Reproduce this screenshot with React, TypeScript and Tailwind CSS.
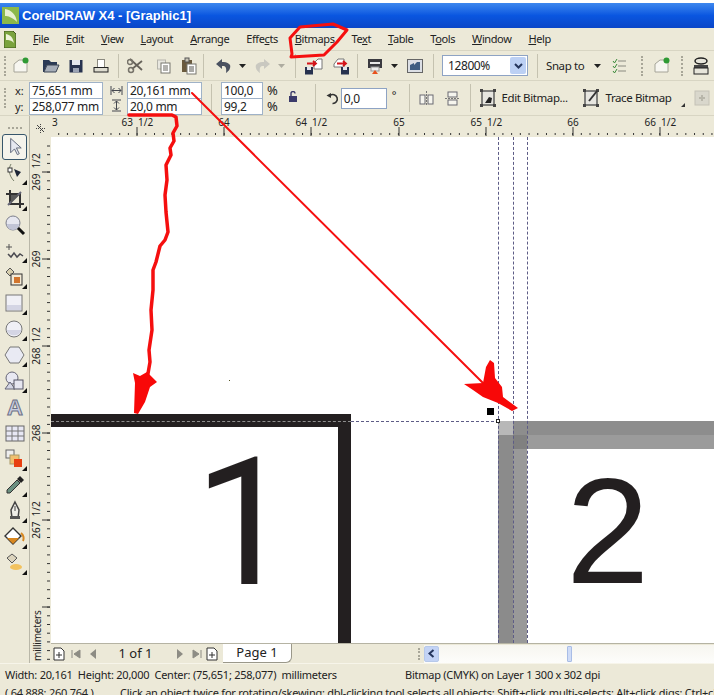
import type { ReactNode } from "react";

const menus: [string, string, string][] = [
  ["", "F", "ile"],
  ["", "E", "dit"],
  ["", "V", "iew"],
  ["", "L", "ayout"],
  ["", "A", "rrange"],
  ["Effe", "c", "ts"],
  ["", "B", "itmaps"],
  ["Te", "x", "t"],
  ["", "T", "able"],
  ["T", "o", "ols"],
  ["", "W", "indow"],
  ["", "H", "elp"],
];

function Ico({ w = 16, h = 16, children, className = "" }: { w?: number; h?: number; children: ReactNode; className?: string }) {
  return (
    <svg width={w} height={h} viewBox={`0 0 ${w} ${h}`} className={`shrink-0 ${className}`}>
      {children}
    </svg>
  );
}

function Grip() {
  return <div className="h-[20px] w-[2px] shrink-0 border-l-2 border-dotted border-[#a8a698]" />;
}

function Sep({ h = "h-[24px]" }: { h?: string }) {
  return <div className={`${h} w-px shrink-0 bg-[#c5c2b0]`} />;
}

function Caret() {
  return (
    <Ico w={7} h={4}>
      <path d="M0 0h7L3.5 4z" fill="#222" />
    </Ico>
  );
}

function Corner() {
  return <path d="M0 5L5 0V5z" fill="#111" transform="translate(19 19)" />;
}

function NewDoc() {
  return (
    <Ico w={18} h={18}>
      <path d="M2 7l5-4h8v12H2z" fill="#f7f6f0" stroke="#a5a498" />
      <circle cx="13.5" cy="3.5" r="3" fill="#2f9a34" />
    </Ico>
  );
}

function Open() {
  return (
    <Ico w={18} h={16}>
      <path d="M1 2h6l2 2h6v3H5L2 14H1z" fill="#2b3a55" />
      <path d="M5 7h12l-3 7H2z" fill="#a6adb8" stroke="#3b4454" />
    </Ico>
  );
}

function Save() {
  return (
    <Ico w={14} h={14}>
      <rect x="0.5" y="1" width="13" height="12.5" fill="#27324f" />
      <rect x="3" y="1" width="8" height="5" fill="#e4e7ee" />
      <rect x="4" y="9" width="6" height="4.5" fill="#9aa2b4" />
    </Ico>
  );
}

function Print() {
  return (
    <Ico w={16} h={16}>
      <rect x="4.5" y="1.5" width="7" height="8" fill="#fff" stroke="#8c8a80" />
      <rect x="1" y="9.5" width="14" height="4.5" fill="#dedcd0" stroke="#222" />
    </Ico>
  );
}

function Cut() {
  return (
    <Ico w={18} h={18}>
      <path d="M3 2l12 11M15 4L5 12" stroke="#66625a" strokeWidth="1.8" fill="none" />
      <circle cx="4" cy="13" r="2.5" fill="none" stroke="#77736a" strokeWidth="1.5" />
      <circle cx="3" cy="5" r="2.5" fill="none" stroke="#77736a" strokeWidth="1.5" />
    </Ico>
  );
}

function Copy() {
  return (
    <Ico w={16} h={16}>
      <rect x="1.5" y="2" width="8" height="9" fill="#e8e7e0" stroke="#b5b4ac" />
      <rect x="5" y="5" width="9" height="10" fill="#fff" stroke="#77766e" />
      <path d="M7 8h5M7 10h5M7 12h5" stroke="#66655e" />
    </Ico>
  );
}

function Paste() {
  return (
    <Ico w={16} h={18}>
      <rect x="1" y="3" width="10" height="12" fill="#6a5a3e" />
      <rect x="4" y="1" width="4" height="4" fill="#c9c5b6" stroke="#555" />
      <rect x="6" y="7" width="9" height="10" fill="#fff" stroke="#77766e" />
      <path d="M8 10h5M8 12h5M8 14h5" stroke="#55544e" />
    </Ico>
  );
}

function Arc({ color, flip = false }: { color: string; flip?: boolean }) {
  return (
    <Ico w={17} h={16}>
      <g transform={flip ? "translate(17 0) scale(-1 1)" : undefined}>
        <path d="M7 1L1 6l6 5V8c3-.5 5 1 4 7 3-2 5-5 4-8-1-2-4-3.5-8-3z" fill={color} />
      </g>
    </Ico>
  );
}

function Transfer({ out = false }: { out?: boolean }) {
  return (
    <Ico w={19} h={18}>
      {out ? (
        <path d="M3 7l4-5h6v8H3z" fill="#fff" stroke="#777" />
      ) : (
        <path d="M10 6l4-4h4v10h-8z" fill="#fff" stroke="#777" />
      )}
      <rect x={out ? 10 : 1} y="10" width="8" height="7.5" fill="#27324f" />
      <rect x={out ? 12 : 3} y="10" width="4" height="3" fill="#e4e7ee" />
      <path d={out ? "M6 6.5h9M12 4l3 2.5-3 2.5" : "M3 6.5h9M9 4l3 2.5-3 2.5"} stroke="#d4141a" strokeWidth="1.8" fill="none" />
    </Ico>
  );
}

function Launcher() {
  return (
    <Ico w={18} h={18}>
      <rect x="2" y="2" width="14" height="9" fill="#3a3a40" />
      <rect x="4" y="5" width="10" height="2" fill="#e8e8e8" />
      <rect x="5" y="10" width="8" height="4" fill="#eee" stroke="#999" />
      <path d="M6 17l3-4 3 4z" fill="#e8501c" />
    </Ico>
  );
}

function Welcome() {
  return (
    <Ico w={16} h={16}>
      <rect x="0.5" y="1.5" width="15" height="13" fill="#dcdfe5" stroke="#666" />
      <path d="M3 12V7l4-2v2l3-3h3v8z" fill="#3f5d82" />
    </Ico>
  );
}

function Checks() {
  return (
    <Ico w={14} h={16}>
      <path d="M1 3l1.5 2L5 1M1 8l1.5 2L5 6M1 13l1.5 2L5 11" stroke="#3b8a3b" fill="none" />
      <path d="M6 3h8M6 8h8M6 13h8" stroke="#8a8a80" />
    </Ico>
  );
}

function Guard() {
  return (
    <Ico w={16} h={18}>
      <ellipse cx="8" cy="4" rx="6" ry="3" fill="#e7e5da" stroke="#222" strokeWidth="1.5" />
      <rect x="1" y="8" width="14" height="3" fill="#444" />
      <rect x="1" y="11" width="14" height="6" fill="#e7e5da" stroke="#222" />
    </Ico>
  );
}

function BitmapFrame({ pen = false, dim = false }: { pen?: boolean; dim?: boolean }) {
  if (dim) {
    return (
      <Ico w={16} h={16}>
        <rect x="1" y="1" width="14" height="14" fill="#d9d7cc" stroke="#c4c2b6" />
        <path d="M5 8h6M8 5v6" stroke="#b8b6aa" strokeWidth="2" />
      </Ico>
    );
  }
  return (
    <Ico w={16} h={18}>
      <rect x="2" y="2" width="12" height="14" fill="#e7e6e0" stroke="#555" strokeWidth="1.4" />
      <rect x="0" y="0" width="3" height="3" fill="#444" />
      <rect x="13" y="0" width="3" height="3" fill="#444" />
      <rect x="0" y="15" width="3" height="3" fill="#444" />
      <rect x="13" y="15" width="3" height="3" fill="#444" />
      {pen ? <path d="M6 12l8-10" stroke="#333" strokeWidth="2" /> : <path d="M5 14l4-6 3 1-1 5z" fill="#222" />}
    </Ico>
  );
}

function Tool({ children, corner = true, active = false }: { children: ReactNode; corner?: boolean; active?: boolean }) {
  return (
    <div
      className={`flex h-[26px] w-[25px] shrink-0 items-center justify-center ${
        active ? "rounded-[3px] border border-[#37566b] bg-[#f5f4ec]" : ""
      }`}
    >
      <svg width="24" height="24" viewBox="0 0 24 24">
        {children}
        {corner && <Corner />}
      </svg>
    </div>
  );
}

function ToolBox() {
  return (
    <div className="flex h-full w-[30px] shrink-0 flex-col items-center border-r border-[#b9b7a8] pt-[11px]">
      <div className="mb-[5px] h-px w-[14px] border-t-2 border-dotted border-[#a8a698]" />
      <Tool corner={false} active>
        <path d="M8 3v15l4-4 3 6 2-1-3-6h5z" fill="#e6e8f0" stroke="#5f6678" />
      </Tool>
      <Tool>
        <path d="M8 3C5 8 6 15 11 20" stroke="#78806a" fill="none" />
        <rect x="5" y="7" width="4" height="4" fill="#fff" stroke="#333" />
        <path d="M11 8l7 3-4 5z" fill="#1c2436" />
      </Tool>
      <Tool>
        <path d="M7 3v14h14M3 7h14v14" stroke="#333" strokeWidth="2" fill="none" />
        <path d="M5 18L18 5" stroke="#667" strokeWidth="2" />
        <path d="M8 16V8h8z" fill="#5a5a5a" />
      </Tool>
      <Tool corner={false}>
        <circle cx="10" cy="10" r="7" fill="#e6e7f0" stroke="#7c7f8c" />
        <path d="M4 11a6 6 0 0012 0z" fill="#c1c4d6" />
        <path d="M15 15l6 6" stroke="#111" strokeWidth="3" />
      </Tool>
      <Tool>
        <path d="M3 8h6M6 5v6" stroke="#555" />
        <path d="M5 15l3 3 3-4 3 4 3-3 3 2" stroke="#4a4a50" strokeWidth="1.5" fill="none" />
      </Tool>
      <Tool>
        <path d="M3 7l4-4 4 4-4 4z" fill="#d8cfae" stroke="#555" />
        <rect x="8" y="9" width="11" height="11" fill="#f3ead6" stroke="#333" />
        <rect x="11" y="12" width="6" height="6" fill="#d2752d" />
      </Tool>
      <Tool>
        <rect x="3" y="4" width="16" height="16" fill="#f0f0f6" stroke="#777" />
        <path d="M4 14h14v5H4z" fill="#d4d5e4" />
      </Tool>
      <Tool>
        <circle cx="11" cy="12" r="8" fill="#f0f0f6" stroke="#777" />
        <path d="M3.5 13a8 8 0 0015 0z" fill="#d4d5e4" />
      </Tool>
      <Tool>
        <path d="M7 4h9l5 8-5 8H7l-5-8z" fill="#e9eaf3" stroke="#777" />
      </Tool>
      <Tool>
        <circle cx="9" cy="9" r="6" fill="#e8e8f2" stroke="#667" />
        <path d="M2 20l5-7 5 7z" fill="#d3d5e4" stroke="#667" />
        <rect x="11" y="11" width="9" height="9" fill="#e6e6f0" stroke="#556" />
      </Tool>
      <Tool corner={false}>
        <text x="12" y="20" textAnchor="middle" fontFamily="Liberation Sans, sans-serif" fontSize="22" fontWeight="700" fill="#c9cce0" stroke="#6d7286" strokeWidth="1">
          A
        </text>
      </Tool>
      <Tool corner={false}>
        <rect x="3" y="5" width="18" height="15" fill="#e8e8f4" stroke="#666" />
        <path d="M3 10h18M3 15h18M9 5v15M15 5v15" stroke="#777" />
      </Tool>
      <Tool>
        <rect x="3" y="3" width="8" height="8" fill="#eee" stroke="#666" />
        <rect x="7" y="8" width="9" height="9" fill="#f0c070" stroke="#a96" />
        <rect x="11" y="12" width="8" height="8" fill="#e83f10" />
      </Tool>
      <Tool>
        <path d="M17 3l4 4-3 3-4-4z" fill="#222" />
        <path d="M14 7l3 3L7 20H4v-3z" fill="#6c9080" stroke="#333" />
      </Tool>
      <Tool>
        <path d="M12 3l4 8-1 8H9l-1-8z" fill="#efeee8" stroke="#444" strokeWidth="1.5" />
        <path d="M12 7v5" stroke="#444" />
        <rect x="7" y="17" width="10" height="3" fill="#555" />
      </Tool>
      <Tool>
        <path d="M2 11l8-8 8 8-8 8z" fill="#fff" stroke="#333" strokeWidth="1.4" />
        <path d="M4 13h12l-6 6z" fill="#d8871f" />
        <path d="M18 8c3 2 3 6 2 8" stroke="#d8871f" strokeWidth="2" fill="none" />
      </Tool>
      <Tool>
        <path d="M4 7l5-4 5 4-5 5z" fill="#dcd4bd" stroke="#555" />
        <ellipse cx="13" cy="16" rx="6" ry="3" fill="#f2c25e" />
      </Tool>
    </div>
  );
}

function VerticalRuler() {
  const marks: [number, string][] = [
    [35, "269  1/2"],
    [122, "269"],
    [209, "268  1/2"],
    [296, "268"],
    [383, "267  1/2"],
  ];
  return (
    <svg width="21" height="526" className="shrink-0">
      {Array.from({ length: 61 }, (_, i) => (
        <line key={i} x1="17" x2="20" y1={9 + i * 8.7} y2={9 + i * 8.7} stroke="#333" />
      ))}
      {[35, 122, 209, 296, 383, 470].map((y) => (
        <line key={y} x1="12" x2="20" y1={y} y2={y} stroke="#333" />
      ))}
      {marks.map(([y, t]) => (
        <text key={y} transform={`translate(10 ${y}) rotate(-90)`} textAnchor="middle" fontSize="10" fill="#222" xmlSpace="preserve" fontFamily="Noto Sans, sans-serif">
          {t}
        </text>
      ))}
      <text transform="translate(11 524) rotate(-90)" fontSize="10" letterSpacing="-0.2" fill="#222" fontFamily="Noto Sans, sans-serif">
        millimeters
      </text>
    </svg>
  );
}

function TopRuler() {
  const ints: [number, string][] = [
    [173, "64"],
    [348, "65"],
    [522, "66"],
  ];
  const halves: [number, string][] = [
    [86, "63"],
    [260, "64"],
    [435, "65"],
    [609, "66"],
  ];
  return (
    <svg width="663" height="21" className="shrink-0">
      {Array.from({ length: 78 }, (_, i) => (
        <line key={i} x1={-1 + i * 8.71} x2={-1 + i * 8.71} y1="17" y2="19" stroke="#333" />
      ))}
      {[...ints, ...halves].map(([x]) => (
        <line key={x} x1={x} x2={x} y1="11" y2="20" stroke="#333" />
      ))}
      <text x="1" y="10" fontSize="10" fill="#222" fontFamily="Noto Sans, sans-serif">
        3
      </text>
      {ints.map(([x, t]) => (
        <text key={x} x={x} y="10" textAnchor="middle" fontSize="10" fill="#222" fontFamily="Noto Sans, sans-serif">
          {t}
        </text>
      ))}
      {halves.map(([x, t]) => (
        <g key={x} fontSize="10" fill="#222" fontFamily="Noto Sans, sans-serif">
          <text x={x - 4} y="10" textAnchor="end">
            {t}
          </text>
          <text x={x + 1} y="10">
            1/2
          </text>
        </g>
      ))}
    </svg>
  );
}

function Canvas() {
  return (
    <div className="relative h-[506px] w-[663px] overflow-hidden bg-white">
      <div className="absolute left-0 top-[277px] h-[13px] w-[300px] bg-[#231f20]" />
      <div className="absolute left-[287px] top-[277px] h-[229px] w-[13px] bg-[#231f20]" />
      <div className="absolute left-0 top-[284px] w-[300px] border-t border-dashed border-[#8d8d8d]" />
      <div className="absolute left-[300px] top-[284px] w-[363px] border-t border-dashed border-[#5d5c86]" />

      <div className="absolute left-[447px] top-[284px] h-[14px] w-[15px] bg-[#b8b8b8]" />
      <div className="absolute left-[462px] top-[284px] h-[14px] w-[201px] bg-[#8d8d8d]" />
      <div className="absolute left-[447px] top-[298px] h-[208px] w-[15px] bg-[#8b8b8b]" />
      <div className="absolute left-[462px] top-[298px] h-[208px] w-[14px] bg-[#999999]" />
      <div className="absolute left-[462px] top-[298px] h-[14px] w-[14px] bg-[#808080]" />
      <div className="absolute left-[476px] top-[298px] h-[14px] w-[187px] bg-[#9b9b9b]" />

      <div className="absolute left-[447px] top-0 h-[506px] border-l border-dashed border-[#5d5c86]" />
      <div className="absolute left-[462px] top-0 h-[506px] border-l border-dashed border-[#5d5c86]" />
      <div className="absolute left-[476px] top-0 h-[506px] border-l border-dashed border-[#5d5c86]" />

      <div className="absolute left-[436px] top-[271px] h-[7px] w-[7px] bg-black" />
      <div className="absolute left-[445px] top-[282px] h-[4px] w-[4px] border border-[#222] bg-white" />
      <div className="absolute left-[178px] top-[243px] h-px w-px bg-[#552]" />

      <span className="absolute left-[143px] top-[297px] font-['Roboto',sans-serif] text-[178px] leading-[1] text-[#231f20]">1</span>
      <span className="absolute left-[515px] top-[319px] font-['Liberation_Sans',sans-serif] text-[150px] leading-[1] text-[#231f20]">2</span>
    </div>
  );
}

function PageBar() {
  return (
    <div className="flex h-[20px] shrink-0 items-center border-t border-[#b5b3a3] text-[12px]">
      <div className="flex w-[367px] shrink-0 items-center">
        <Ico w={12} h={14} className="ml-[2px]">
          <path d="M1 1h7l3 3v9H1z" fill="#fff" stroke="#333" />
          <path d="M6 5v6M3 8h6" stroke="#333" />
        </Ico>
        <Ico w={10} h={10} className="ml-[6px]">
          <path d="M1 1v8M9 1L3 5l6 4z" fill="#8d8c84" stroke="#8d8c84" />
        </Ico>
        <Ico w={7} h={10} className="ml-[9px]">
          <path d="M6 0v10L0 5z" fill="#8d8c84" />
        </Ico>
        <span className="ml-[11px] w-[55px] text-center text-[13px] text-[#222]">1 of 1</span>
        <Ico w={7} h={10} className="ml-[13px]">
          <path d="M1 0v10l6-5z" fill="#8d8c84" />
        </Ico>
        <Ico w={10} h={10} className="ml-[9px]">
          <path d="M9 1v8M1 1l6 4-6 4z" fill="#8d8c84" stroke="#8d8c84" />
        </Ico>
        <Ico w={12} h={14} className="ml-[4px]">
          <path d="M1 1h7l3 3v9H1z" fill="#fff" stroke="#333" />
          <path d="M6 5v6M3 8h6" stroke="#333" />
        </Ico>
        <div className="ml-[5px] flex h-[19px] w-[69px] items-center justify-center rounded-br-[6px] border-r border-b border-[#9a988a] bg-white text-[13px] text-[#222]">
          Page 1
        </div>
      </div>
      <div className="h-[12px] w-[2px] shrink-0 border-l-2 border-dotted border-[#a8a698]" />
      <div className="ml-[4px] flex h-[18px] flex-1 items-center bg-gradient-to-b from-[#f7f6f0] to-[#fdfdfb]">
        <div className="flex h-[16px] w-[15px] items-center justify-center rounded-[2px] border border-[#b7c9ea] bg-[#c3d3f5]">
          <Ico w={7} h={9}>
            <path d="M5.5 1L1.5 4.5 5.5 8" stroke="#25355c" strokeWidth="2" fill="none" />
          </Ico>
        </div>
        <div className="ml-[128px] h-[16px] w-[5px] rounded-[1px] border border-[#a9bde6] bg-[#cfdcf7]" />
      </div>
    </div>
  );
}

export default function App() {
  return (
    <div className="relative flex h-[695px] w-[714px] flex-col overflow-hidden bg-[#ece9d8] font-['Noto_Sans',sans-serif] text-[11px] text-[#222]">
      <div className="h-[3px] shrink-0 bg-white" />
      <div className="flex h-[25px] shrink-0 items-center gap-[3px] bg-gradient-to-b from-[#3d87ee] via-[#0a56e0] to-[#0a46c8] pl-[2px]">
        <Ico w={17} h={17}>
          <rect width="17" height="17" fill="#8cb84a" />
          <path d="M3 2c6 1 11 5 12 13-5-5-9-6-12-6z" fill="#e8f0d0" />
        </Ico>
        <span className="font-['Liberation_Sans',sans-serif] text-[13px] font-bold text-white">CorelDRAW X4 - [Graphic1]</span>
      </div>

      <div className="flex h-[23px] shrink-0 items-center gap-[17px] border-b border-[#d8d5c3] pl-[4px] tracking-[-0.4px]">
        <Ico w={12} h={17}>
          <path d="M0 0h9l3 3v14H0z" fill="#7ba33e" stroke="#41591d" />
          <path d="M2 3c5 1 7 4 8 9-3-3-5-3-8-3z" fill="#eef3d8" />
        </Ico>
        {menus.map(([a, b, c]) => (
          <span key={a + b + c}>
            {a}
            <u>{b}</u>
            {c}
          </span>
        ))}
      </div>

      <div className="flex h-[30px] shrink-0 items-center border-b border-[#d8d5c3] pl-[4px]">
        <Grip />
        <div className="ml-[6px]"><NewDoc /></div>
        <div className="ml-[12px]"><Open /></div>
        <div className="ml-[9px]"><Save /></div>
        <div className="ml-[10px]"><Print /></div>
        <div className="ml-[9px] mr-[8px]"><Sep /></div>
        <Cut />
        <div className="ml-[11px]"><Copy /></div>
        <div className="ml-[9px]"><Paste /></div>
        <div className="mx-[6px]"><Sep /></div>
        <div className="ml-[5px]"><Arc color="#4a5160" /></div>
        <div className="ml-[7px]"><Caret /></div>
        <div className="ml-[8px]"><Arc color="#c9c8c0" flip /></div>
        <div className="ml-[7px] opacity-30"><Caret /></div>
        <div className="ml-[10px]"><Sep /></div>
        <div className="ml-[8px]"><Transfer /></div>
        <div className="ml-[8px]"><Transfer out /></div>
        <div className="ml-[7px]"><Sep /></div>
        <div className="ml-[8px]"><Launcher /></div>
        <div className="ml-[7px]"><Caret /></div>
        <div className="ml-[9px]"><Welcome /></div>
        <div className="ml-[10px]"><Sep /></div>
        <div className="ml-[8px] flex h-[21px] w-[86px] shrink-0 items-center justify-between border border-[#8ea3c4] bg-white pl-[5px] pr-px text-[12px] tracking-[-0.4px]">
          12800%
          <div className="flex h-[17px] w-[16px] items-center justify-center rounded-[2px] bg-[#bcd0f4]">
            <Ico w={9} h={6}>
              <path d="M1 1l3.5 3.5L8 1" stroke="#25355c" strokeWidth="2" fill="none" />
            </Ico>
          </div>
        </div>
        <div className="ml-[9px]"><Sep /></div>
        <span className="ml-[8px] whitespace-nowrap text-[11.5px] tracking-[-0.4px]">Snap to</span>
        <div className="ml-[10px]"><Caret /></div>
        <div className="ml-[11px]"><Checks /></div>
        <div className="ml-[15px]"><Grip /></div>
        <div className="ml-[10px]"><NewDoc /></div>
        <div className="ml-[10px]"><Grip /></div>
        <div className="ml-[10px]"><Guard /></div>
      </div>

      <div className="flex h-[35px] shrink-0 items-center border-b border-[#d8d5c3] pl-[4px] whitespace-nowrap">
        <Grip />
        <div className="ml-[9px] flex w-[14px] shrink-0 flex-col gap-[1px] text-[11px] leading-[15px]">
          <span>x:</span>
          <span>y:</span>
        </div>
        <div className="flex w-[74px] shrink-0 flex-col text-[12px] leading-[15px] tracking-[-0.3px]">
          <div className="h-[17px] border border-[#9fb2c8] bg-white pl-[2px]">75,651 mm</div>
          <div className="-mt-px h-[17px] border border-[#9fb2c8] bg-white pl-[2px]">258,077 mm</div>
        </div>
        <div className="ml-[5px] flex w-[16px] shrink-0 flex-col items-center gap-[3px]">
          <Ico w={13} h={11}>
            <path d="M1 1v9M12 1v9M2 5.5h9M4.5 3L2 5.5 4.5 8M8.5 3L11 5.5 8.5 8" stroke="#44474f" fill="none" />
          </Ico>
          <Ico w={11} h={13}>
            <path d="M1 1h9M1 12h9M5.5 2v9M3 4.5L5.5 2 8 4.5M3 8.5L5.5 11 8 8.5" stroke="#44474f" fill="none" />
          </Ico>
        </div>
        <div className="ml-[3px] flex w-[75px] shrink-0 flex-col text-[12px] leading-[15px] tracking-[-0.3px]">
          <div className="h-[17px] border border-[#9fb2c8] bg-white pl-[2px]">20,161 mm</div>
          <div className="-mt-px h-[17px] border border-[#9fb2c8] bg-white pl-[2px]">20,0 mm</div>
        </div>
        <div className="mx-[9px]"><Sep h="h-[28px]" /></div>
        <div className="flex w-[42px] shrink-0 flex-col text-[12px] leading-[15px] tracking-[-0.3px]">
          <div className="h-[17px] border border-[#9fb2c8] bg-white pl-[2px]">100,0</div>
          <div className="-mt-px h-[17px] border border-[#9fb2c8] bg-white pl-[2px]">99,2</div>
        </div>
        <div className="ml-[4px] flex flex-col text-[13px] leading-[16px]">
          <span>%</span>
          <span>%</span>
        </div>
        <Ico w={10} h={11} className="ml-[10px] mb-[4px]">
          <rect x="1" y="5" width="8" height="6" fill="#3b3a6a" />
          <path d="M3 5V2.5a2 2 0 014 0" stroke="#3b3a6a" fill="none" strokeWidth="1.4" />
        </Ico>
        <div className="ml-[17px]"><Sep h="h-[28px]" /></div>
        <Ico w={13} h={13} className="ml-[10px]">
          <path d="M4 3.5A4.5 4.5 0 116.5 11.5" stroke="#333" strokeWidth="1.6" fill="none" />
          <path d="M0.5 3.5L5 1v5z" fill="#333" />
        </Ico>
        <div className="ml-[2px] h-[21px] w-[46px] shrink-0 border border-[#8ea3c4] bg-white pl-[2px] text-[12px] leading-[19px] tracking-[-0.3px]">0,0</div>
        <span className="ml-[5px] mb-[5px] text-[11px]">°</span>
        <div className="ml-[12px]"><Sep h="h-[28px]" /></div>
        <Ico w={15} h={15} className="ml-[9px]">
          <path d="M7.5 0v15" stroke="#777" strokeDasharray="2 1" />
          <rect x="1" y="4" width="5" height="9" fill="#f6f5ee" stroke="#6a6a72" />
          <rect x="9" y="4" width="5" height="9" fill="#f6f5ee" stroke="#6a6a72" />
        </Ico>
        <Ico w={15} h={15} className="ml-[11px]">
          <path d="M0 7.5h15" stroke="#777" strokeDasharray="2 1" />
          <rect x="3" y="1" width="9" height="5" fill="#f6f5ee" stroke="#6a6a72" />
          <rect x="3" y="9" width="9" height="5" fill="#f6f5ee" stroke="#6a6a72" />
        </Ico>
        <div className="ml-[10px]"><Sep h="h-[28px]" /></div>
        <div className="ml-[9px]"><BitmapFrame /></div>
        <span className="ml-[6px] w-[68px] shrink-0 text-[11.5px] tracking-[-0.4px]">Edit Bitmap...</span>
        <div className="ml-[13px]"><BitmapFrame pen /></div>
        <span className="ml-[7px] w-[63px] shrink-0 text-[11.5px] tracking-[-0.4px]">Trace Bitmap</span>
        <Ico w={4} h={4} className="ml-[12px] mt-[14px]">
          <path d="M4 0v4H0z" fill="#333" />
        </Ico>
        <div className="ml-[9px]"><BitmapFrame dim /></div>
      </div>

      <div className="flex min-h-0 flex-1">
        <ToolBox />
        <div className="flex min-w-0 flex-1 flex-col">
          <div className="flex h-[21px] shrink-0">
            <div className="flex w-[21px] shrink-0 items-end justify-center pb-[3px]">
              <Ico w={11} h={11}>
                <path d="M1 5.5h9M5.5 1v9" stroke="#444" strokeDasharray="1 1" />
                <path d="M2 2l7 7" stroke="#444" />
              </Ico>
            </div>
            <TopRuler />
          </div>
          <div className="flex h-[526px] shrink-0">
            <VerticalRuler />
            <div className="flex flex-col">
              <Canvas />
              <PageBar />
            </div>
          </div>
        </div>
      </div>

      <div className="h-[32px] shrink-0 border-t border-[#f7f5ea] bg-[#ece9d8] tracking-[-0.25px]">
        <div className="flex h-[22px] items-center pl-[5px] pt-[1px] text-[11px]">
          <span className="w-[400px] shrink-0 whitespace-pre">Width: 20,161  Height: 20,000  Center: (75,651; 258,077)  millimeters</span>
          <span className="whitespace-nowrap">Bitmap (CMYK) on Layer 1 300 x 302 dpi</span>
        </div>
        <div className="flex h-[14px] items-center whitespace-nowrap pl-[5px] text-[11px]">
          <span className="w-[115px] shrink-0">( 64,888; 260,764 )</span>
          <span>Click an object twice for rotating/skewing; dbl-clicking tool selects all objects; Shift+click multi-selects; Alt+click digs; Ctrl+click</span>
        </div>
      </div>

      <svg width="714" height="695" className="pointer-events-none absolute left-0 top-0">
        <g fill="none" stroke="#f50f0f" strokeLinejoin="round" strokeLinecap="round">
          <path d="M292 54L290 38 300 27 333 24 347 30 337 42 324 55 291 57z" strokeWidth="3" />
          <path d="M192 93L488 388" strokeWidth="2" />
          <path d="M129 115H172L176 117 177 126 173 133 174 141 170 148 171 155 166 165 167 180 165 195 166 212 168 232 165 240 160 246 156 262 153 270 153 290 151 310 152 330 149 350 150 362 146 385" strokeWidth="3.5" />
        </g>
        <g fill="#f80808">
          <path d="M490 360L494 363 495 378 502 387 503 397 518 408 512 411 498 403 483 397 473 390 464 384 483 383 486 367z" />
          <path d="M133 373L140 376 147 372 157 382 150 387 145 402 138 414 134 413 135 383z" />
        </g>
      </svg>
    </div>
  );
}
